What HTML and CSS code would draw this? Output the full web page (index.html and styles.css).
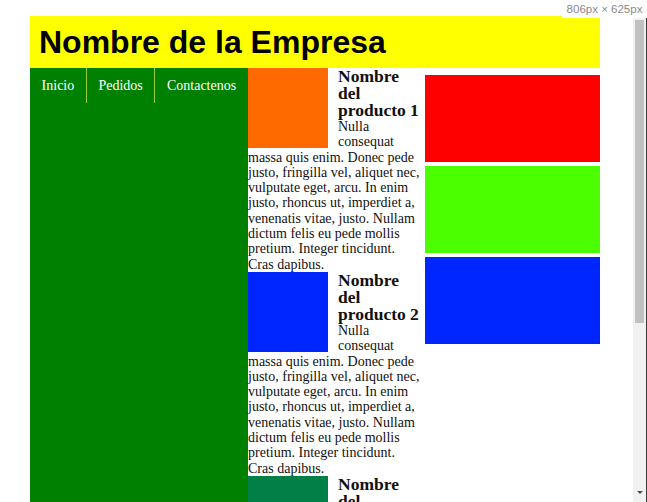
FILE: index.html
```html
<!DOCTYPE html>
<html lang="es">
<head>
<meta charset="utf-8">
<title>Nombre de la Empresa</title>
<link rel="stylesheet" href="styles.css">
</head>
<body>
<div class="viewport">
  <div class="page">
    <header class="header"><h1 class="title">Nombre de la Empresa</h1></header>
    <div class="layout">
      <nav class="sidebar">
        <ul class="menu">
          <li class="menu-item">Inicio</li>
          <li class="menu-item">Pedidos</li>
          <li class="menu-item">Contactenos</li>
        </ul>
      </nav>
      <main class="main">
        <article class="product">
          <div class="thumb thumb-orange"></div>
          <h3 class="product-title">Nombre del producto 1</h3>
          <p class="product-text">Nulla consequat massa quis enim. Donec pede justo, fringilla vel, aliquet nec, vulputate eget, arcu. In enim justo, rhoncus ut, imperdiet a, venenatis vitae, justo. Nullam dictum felis eu pede mollis pretium. Integer tincidunt. Cras dapibus.</p>
        </article>
        <article class="product">
          <div class="thumb thumb-blue"></div>
          <h3 class="product-title">Nombre del producto 2</h3>
          <p class="product-text">Nulla consequat massa quis enim. Donec pede justo, fringilla vel, aliquet nec, vulputate eget, arcu. In enim justo, rhoncus ut, imperdiet a, venenatis vitae, justo. Nullam dictum felis eu pede mollis pretium. Integer tincidunt. Cras dapibus.</p>
        </article>
        <article class="product">
          <div class="thumb thumb-green"></div>
          <h3 class="product-title">Nombre del producto 3</h3>
          <p class="product-text">Nulla consequat massa quis enim. Donec pede justo, fringilla vel, aliquet nec, vulputate eget, arcu. In enim justo, rhoncus ut, imperdiet a, venenatis vitae, justo. Nullam dictum felis eu pede mollis pretium. Integer tincidunt. Cras dapibus.</p>
        </article>
      </main>
      <aside class="aside">
        <div class="banner banner-red"></div>
        <div class="banner banner-lime"></div>
        <div class="banner banner-blue"></div>
      </aside>
    </div>
  </div>
</div>
<div class="scrollbar">
  <div class="thumb-bar"></div>
  <div class="scroll-spacer"></div>
  <div class="arrow-down"></div>
</div>
<div class="size-tip">806px × 625px</div>
</body>
</html>
```
FILE: styles.css
```css
html, body {
  margin: 0;
  padding: 0;
  height: 502px;
  overflow: hidden;
  background: #fff;
}
body {
  display: flex;
  position: relative;
  font-family: "Liberation Serif", "Times New Roman", serif;
  color: #111;
}
.viewport {
  flex: 1;
  overflow: hidden;
  height: 502px;
}
.page {
  padding: 16px 0 0 30px;
  width: 570px;
}
.header {
  height: 52px;
  background: #ffff00;
  display: flex;
  align-items: center;
  padding: 0 9px;
}
.title {
  margin: 0;
  font-family: "Liberation Sans", Arial, sans-serif;
  font-weight: bold;
  font-size: 32px;
  color: #000;
}
.layout {
  display: flex;
  align-items: stretch;
}
.sidebar {
  width: 218px;
  flex: none;
  background: #008000;
}
.menu {
  list-style: none;
  margin: 0;
  padding: 0;
  display: flex;
}
.menu-item {
  height: 35px;
  line-height: 35px;
  padding: 0 11.6px;
  color: #fff;
  font-size: 14px;
  white-space: nowrap;
}
.menu-item + .menu-item {
  border-left: 1px solid #9acd32;
}
.main {
  width: 177px;
  flex: none;
  box-sizing: border-box;
  padding-right: 4px;
}
.product {
  display: flow-root;
}
.thumb {
  float: left;
  width: 80px;
  height: 80px;
  margin-right: 10px;
}
.thumb-orange { background: #ff6a00; }
.thumb-blue { background: #0026ff; }
.thumb-green { background: #007f46; }
.product-title {
  margin: 0;
  font-size: 17.5px;
  line-height: 17px;
  font-weight: bold;
  color: #111;
}
.product-text {
  margin: 0;
  font-size: 14px;
  line-height: 15.3px;
}
.aside {
  width: 175px;
  flex: none;
  padding-top: 7px;
  display: flex;
  flex-direction: column;
  gap: 4px;
}
.banner {
  height: 87px;
}
.banner-red { background: #ff0000; }
.banner-lime { background: #4cff00; }
.banner-blue { background: #0026ff; }
.scrollbar {
  width: 14px;
  flex: none;
  height: 502px;
  background: #f1f1f1;
  border-right: 1px solid #3a3a3a;
  display: flex;
  flex-direction: column;
  align-items: center;
  padding-top: 20px;
  box-sizing: border-box;
}
.thumb-bar {
  width: 9px;
  height: 303px;
  background: #c1c1c1;
}
.scroll-spacer {
  flex: 1;
}
.arrow-down {
  width: 0;
  height: 0;
  border-left: 3px solid transparent;
  border-right: 3px solid transparent;
  border-top: 3px solid #505050;
  margin-bottom: 8px;
}
.size-tip {
  position: absolute;
  top: 0;
  right: 0;
  width: 85px;
  height: 18px;
  background: #fff;
  color: #8a8a8a;
  font-family: "Liberation Sans", Arial, sans-serif;
  font-size: 11.5px;
  line-height: 18px;
  text-align: center;
}
```
